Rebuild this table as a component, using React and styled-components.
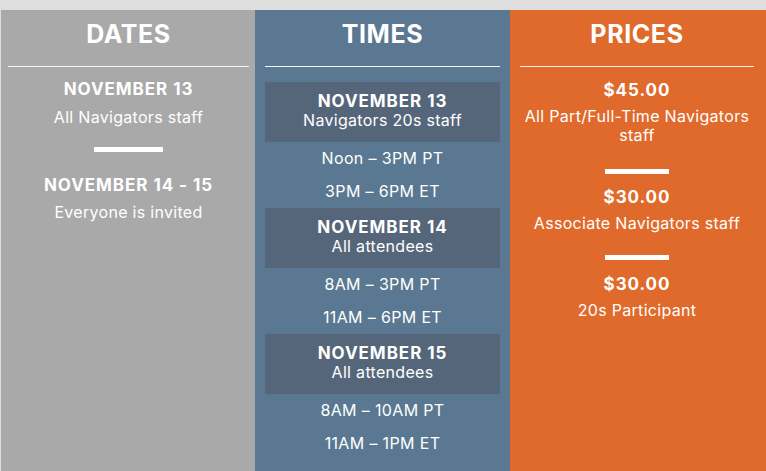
import styled, { createGlobalStyle } from 'styled-components'

const GlobalStyle = createGlobalStyle`
  html, body, #root {
    margin: 0;
    height: 100%;
  }
  body {
    font-family: Inter, 'Open Sans', sans-serif;
    background-color: #dedede;
  }
`

const dates = [
  { title: 'NOVEMBER 13', sub: 'All Navigators staff' },
  { title: 'NOVEMBER 14 - 15', sub: 'Everyone is invited' },
]

const times = [
  { title: 'NOVEMBER 13', sub: 'Navigators 20s staff', rows: ['Noon – 3PM PT', '3PM – 6PM ET'] },
  { title: 'NOVEMBER 14', sub: 'All attendees', rows: ['8AM – 3PM PT', '11AM – 6PM ET'] },
  { title: 'NOVEMBER 15', sub: 'All attendees', rows: ['8AM – 10AM PT', '11AM – 1PM ET'] },
]

const App = () => {
  return (
    <Page>
      <GlobalStyle />
      <Column $bg='#a9a9a9' $pl={7} $pr={6}>
        <Heading>DATES</Heading>
        <Divider />
        <Title $top={13}>{dates[0].title}</Title>
        <Sub $top={9}>{dates[0].sub}</Sub>
        <Bar $width={69} $top={20} />
        <Title $top={24}>{dates[1].title}</Title>
        <Sub $top={8}>{dates[1].sub}</Sub>
      </Column>

      <Column $bg='#5a7891' $pl={10} $pr={10}>
        <Heading>TIMES</Heading>
        <Divider />
        <TimeList>
          {times.map(day => (
            <div key={day.title}>
              <DayBox>
                <Title $top={0}>{day.title}</Title>
                <Sub $top={0}>{day.sub}</Sub>
              </DayBox>
              {day.rows.map(row => (
                <TimeRow key={row}>{row}</TimeRow>
              ))}
            </div>
          ))}
        </TimeList>
      </Column>

      <Column $bg='#e06a2b' $pl={10} $pr={12}>
        <Heading>PRICES</Heading>
        <Divider />
        <Title $top={14}>$45.00</Title>
        <Sub $top={7}>
          All Part/Full-Time Navigators
          <br />
          staff
        </Sub>
        <Bar $width={64} $top={24} />
        <Title $top={14}>$30.00</Title>
        <Sub $top={7}>Associate Navigators staff</Sub>
        <Bar $width={64} $top={22} />
        <Title $top={15}>$30.00</Title>
        <Sub $top={7}>20s Participant</Sub>
      </Column>
    </Page>
  )
}

export default App

const Page = styled.div`
  min-height: 100%;
  box-sizing: border-box;
  padding: 10px 0 0 1px;
  display: grid;
  grid-template-columns: 254px 255px 1fr;
`

const Column = styled.section`
  background-color: ${p => p.$bg};
  padding: 8px ${p => p.$pr}px 16px ${p => p.$pl}px;
  display: flex;
  flex-direction: column;
  align-items: center;
  text-align: center;
  color: #fff;
`

const Heading = styled.h2`
  margin: 0;
  font-size: 25px;
  font-weight: 700;
  line-height: 32px;
  letter-spacing: 0.6px;
`

const Divider = styled.div`
  align-self: stretch;
  height: 1px;
  margin-top: 16px;
  background-color: #f4f4f4;
`

const Title = styled.div`
  margin-top: ${p => p.$top}px;
  font-size: 17px;
  font-weight: 700;
  line-height: 19px;
  letter-spacing: 0.95px;
`

const Sub = styled.div`
  margin-top: ${p => p.$top}px;
  font-size: 16px;
  font-weight: 400;
  line-height: 19px;
  letter-spacing: 0.3px;
`

const Bar = styled.div`
  width: ${p => p.$width}px;
  height: 5px;
  margin-top: ${p => p.$top}px;
  background-color: #fff;
`

const TimeList = styled.div`
  align-self: stretch;
  margin-top: 15px;
`

const DayBox = styled.div`
  height: 60px;
  box-sizing: border-box;
  padding-top: 10px;
  background-color: #56667a;
`

const TimeRow = styled.div`
  font-size: 16px;
  line-height: 33px;
  letter-spacing: 0.35px;
`
